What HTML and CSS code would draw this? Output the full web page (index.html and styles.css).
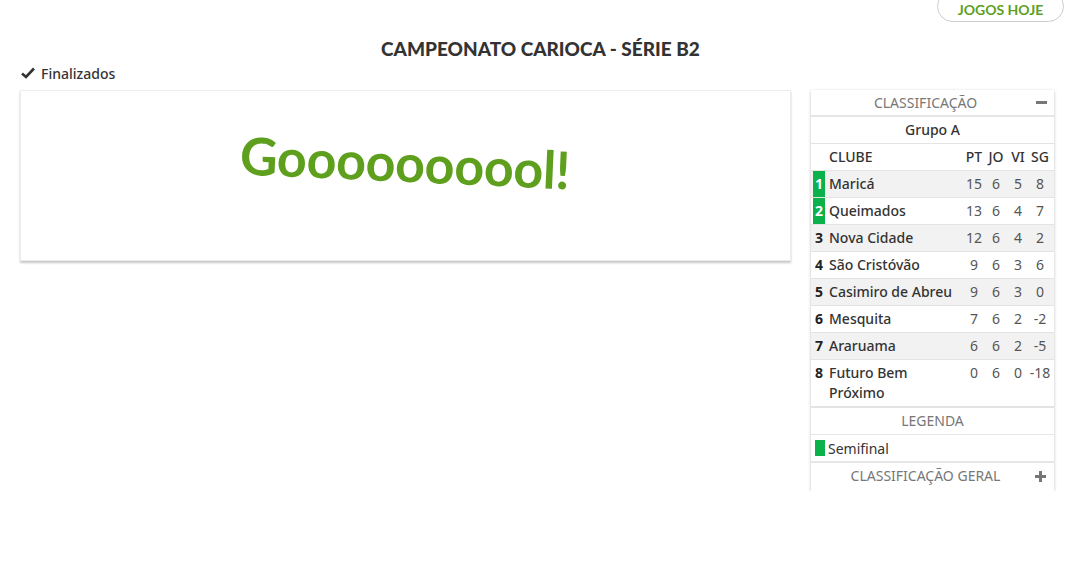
FILE: index.html
```html
<!DOCTYPE html>
<html lang="pt-BR">
<head>
<meta charset="utf-8">
<title>Campeonato Carioca - Série B2</title>
<link rel="stylesheet" href="styles.css">
</head>
<body>
<header class="topbar">
  <a class="today-btn">JOGOS HOJE</a>
</header>
<h1 class="title">CAMPEONATO CARIOCA - SÉRIE B2</h1>
<div class="status">
  <svg class="check" width="14" height="12" viewBox="0 0 14 12"><path d="M1 6.5 L5 10 L13 1.5" fill="none" stroke="#333" stroke-width="2.6" stroke-linejoin="miter"/></svg>
  <span>Finalizados</span>
</div>
<main class="main">
  <section class="card">
    <div class="goal">Goooooooool!</div>
  </section>
  <aside class="panel">
    <div class="ph with-icon">CLASSIFICAÇÃO<span class="minus"></span></div>
    <div class="group">Grupo A</div>
    <div class="row head"><span></span><span class="name">CLUBE</span><span>PT</span><span>JO</span><span>VI</span><span>SG</span></div>
    <div class="row odd"><span class="pos semi">1</span><span class="name">Maricá</span><span>15</span><span>6</span><span>5</span><span>8</span></div>
    <div class="row"><span class="pos semi">2</span><span class="name">Queimados</span><span>13</span><span>6</span><span>4</span><span>7</span></div>
    <div class="row odd"><span class="pos">3</span><span class="name">Nova Cidade</span><span>12</span><span>6</span><span>4</span><span>2</span></div>
    <div class="row"><span class="pos">4</span><span class="name">São Cristóvão</span><span>9</span><span>6</span><span>3</span><span>6</span></div>
    <div class="row odd"><span class="pos">5</span><span class="name">Casimiro de Abreu</span><span>9</span><span>6</span><span>3</span><span>0</span></div>
    <div class="row"><span class="pos">6</span><span class="name">Mesquita</span><span>7</span><span>6</span><span>2</span><span>-2</span></div>
    <div class="row odd"><span class="pos">7</span><span class="name">Araruama</span><span>6</span><span>6</span><span>2</span><span>-5</span></div>
    <div class="row"><span class="pos">8</span><span class="name">Futuro Bem Próximo</span><span>0</span><span>6</span><span>0</span><span>-18</span></div>
    <div class="ph legend-h">LEGENDA</div>
    <div class="legend"><span class="swatch"></span>Semifinal</div>
    <div class="ph with-icon foot">CLASSIFICAÇÃO GERAL<span class="plus"></span></div>
  </aside>
</main>
</body>
</html>
```
FILE: styles.css
```css
* { box-sizing: border-box; }
body {
  margin: 0;
  background: #fff;
  font-family: "Noto Sans", Lato, sans-serif;
  color: #333;
}
.topbar {
  display: flex;
  justify-content: flex-end;
  padding-right: 17px;
  height: 22px;
}
.today-btn {
  display: flex;
  align-items: center;
  justify-content: center;
  width: 127px;
  height: 31px;
  margin-top: -9px;
  border: 1px solid #ccc;
  border-radius: 16px;
  color: #5e9f1e;
  font-family: Lato, sans-serif;
  font-weight: 700;
  font-size: 14px;
  padding-top: 6px;
}
.title {
  margin: 15px 0 0;
  text-align: center;
  font-family: Lato, sans-serif;
  font-size: 19px;
  font-weight: 900;
  line-height: 24px;
  color: #333;
}
.status {
  display: flex;
  align-items: center;
  gap: 6px;
  padding-left: 21px;
  margin-top: 2px;
  height: 20px;
  font-size: 14px;
  font-weight: 500;
}
.main {
  display: flex;
  align-items: flex-start;
  gap: 20px;
  padding: 0 27px 0 20px;
  margin-top: 7px;
}
.card {
  flex: 0 0 771px;
  height: 171px;
  border: 1px solid #ececec;
  box-shadow: 0 2px 2px rgba(0,0,0,.22);
  display: flex;
  justify-content: center;
  padding-top: 38px;
}
.goal {
  color: #5e9f1e;
  font-family: Lato, sans-serif;
  font-size: 52px;
  font-weight: 700;
  line-height: 66px;
  height: 66px;
  letter-spacing: -0.3px;
  transform: rotate(2.6deg);
}
.panel {
  flex: 0 0 243px;
  box-shadow: 0 1px 3px rgba(0,0,0,.25);
  font-size: 14px;
}
.ph {
  position: relative;
  height: 27px;
  line-height: 26px;
  text-align: center;
  color: #777;
  border-bottom: 2px solid #e6e6e6;
}
.ph.with-icon { padding-right: 14px; }
.minus {
  position: absolute;
  right: 7px;
  top: 11px;
  width: 11px;
  height: 3px;
  background: #777;
}
.plus {
  position: absolute;
  right: 8px;
  top: 8px;
  width: 11px;
  height: 11px;
  background:
    linear-gradient(#777,#777) center/11px 3px no-repeat,
    linear-gradient(#777,#777) center/3px 11px no-repeat;
}
.group {
  height: 27px;
  line-height: 26px;
  text-align: center;
  border-bottom: 1px solid #e3e3e3;
  font-weight: 500;
  color: #333;
}
.row {
  display: grid;
  grid-template-columns: 12px 1fr 22px 22px 22px 22px;
  padding: 0 3px 0 2px;
  border-bottom: 1px solid #e3e3e3;
  line-height: 20px;
  color: #555;
}
.row > span {
  padding: 3px 0;
  text-align: center;
}
.row.odd { background: #f2f2f2; }
.row .name {
  text-align: left;
  padding-left: 4px;
  color: #333;
  font-weight: 500;
}
.row.head { color: #333; font-weight: 500; }
.row .pos {
  color: #222;
  font-weight: 700;
}
.row .pos.semi {
  background: #0bb24c;
  color: #fff;
}
.legend-h { border-bottom-width: 1px; border-top: 1px solid #e3e3e3; height: 28px; }
.legend {
  display: flex;
  align-items: center;
  gap: 3px;
  height: 28px;
  padding-left: 4px;
  border-bottom: 2px solid #e6e6e6;
  color: #333;
}
.swatch {
  width: 10px;
  height: 16px;
  background: #0bb24c;
}
.foot { border-bottom: none; height: 28px; }
```
